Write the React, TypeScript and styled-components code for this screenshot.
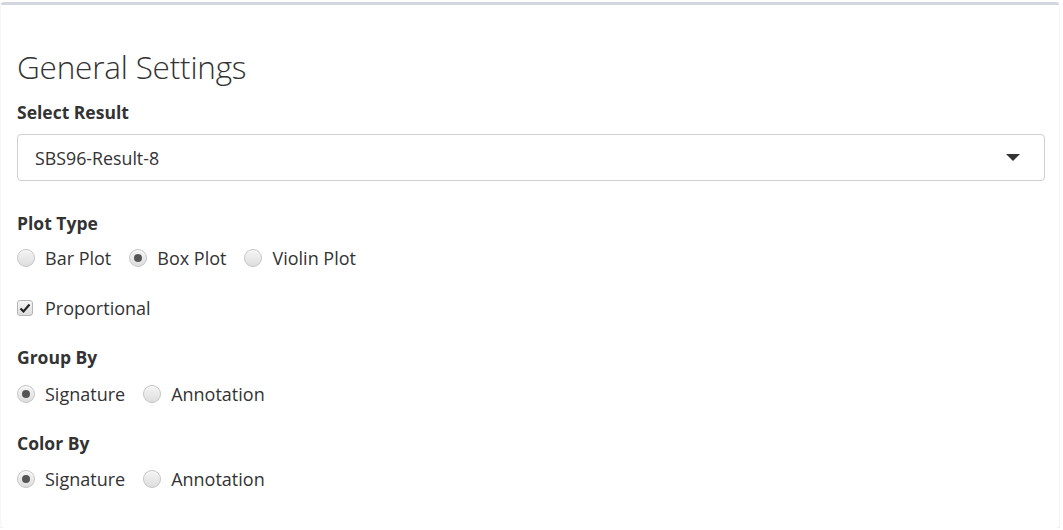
import React, { useState } from "react";
import styled, { createGlobalStyle } from "styled-components";

const GlobalStyle = createGlobalStyle`
  html, body {
    margin: 0;
    padding: 0;
    background: #ffffff;
  }
  body {
    padding: 2px 4px 0 1px;
    font-family: "Open Sans", Lato, sans-serif;
    color: #333333;
  }
  * {
    box-sizing: border-box;
  }
`;

const Box = styled.section`
  width: 1058px;
  height: 526px;
  background: #ffffff;
  border-top: 3px solid #d2d6de;
  border-radius: 3px;
  box-shadow: 0 1px 2px rgba(0, 0, 0, 0.15);
  padding: 44px 14px 0 16px;
  display: flex;
  flex-direction: column;
`;

const Title = styled.h2`
  margin: 0 0 16px 0;
  font-size: 31.5px;
  line-height: 36px;
  font-weight: 300;
  letter-spacing: -0.2px;
  color: #333;
`;

const FieldLabel = styled.div<{ $gap?: number }>`
  font-size: 17.5px;
  line-height: 22px;
  font-weight: 700;
  margin-bottom: ${(p) => p.$gap ?? 11}px;
`;

const Field = styled.div<{ $gap?: number }>`
  margin-bottom: ${(p) => p.$gap ?? 0}px;
`;

const Select = styled.div`
  height: 47px;
  border: 1px solid #cfcfcf;
  border-radius: 4px;
  padding: 0 24px 0 17px;
  display: flex;
  align-items: center;
  justify-content: space-between;
  font-size: 17.8px;
`;

const Caret = styled.span`
  width: 0;
  height: 0;
  border-left: 7px solid transparent;
  border-right: 7px solid transparent;
  border-top: 7px solid #333;
`;

const Options = styled.div`
  display: flex;
  align-items: center;
  height: 22px;
`;

const Option = styled.label`
  display: flex;
  align-items: center;
  gap: 10px;
  margin-right: 18px;
  font-size: 18px;
  color: #333;
  cursor: pointer;
`;

const RadioDot = styled.span<{ $on: boolean }>`
  width: 18px;
  height: 18px;
  border-radius: 50%;
  border: 1px solid #c4c4c4;
  background: linear-gradient(#f4f4f4, #dedede);
  box-shadow: inset 0 1px 1px rgba(255, 255, 255, 0.8);
  display: flex;
  align-items: center;
  justify-content: center;
  &::after {
    content: "";
    width: 8px;
    height: 8px;
    border-radius: 50%;
    background: #555;
    display: ${(p) => (p.$on ? "block" : "none")};
  }
`;

const CheckBox = styled.span`
  width: 16px;
  height: 16px;
  margin-right: 2px;
  border-radius: 3px;
  border: 1px solid #b5b5b5;
  background: linear-gradient(#f6f6f6, #dcdcdc);
  display: flex;
  align-items: center;
  justify-content: center;
  color: #222;
`;

function Radio({
  options,
  value,
  onChange,
}: {
  options: string[];
  value: string;
  onChange: (v: string) => void;
}) {
  return (
    <Options>
      {options.map((o) => (
        <Option key={o} onClick={() => onChange(o)}>
          <RadioDot $on={o === value} />
          {o}
        </Option>
      ))}
    </Options>
  );
}

export default function App() {
  const [plotType, setPlotType] = useState("Box Plot");
  const [proportional, setProportional] = useState(true);
  const [groupBy, setGroupBy] = useState("Signature");
  const [colorBy, setColorBy] = useState("Signature");

  return (
    <>
      <GlobalStyle />
      <Box>
        <Title>General Settings</Title>
        <Field $gap={31}>
          <FieldLabel>Select Result</FieldLabel>
          <Select>
            SBS96-Result-8
            <Caret />
          </Select>
        </Field>
        <Field $gap={28}>
          <FieldLabel $gap={13}>Plot Type</FieldLabel>
          <Radio
            options={["Bar Plot", "Box Plot", "Violin Plot"]}
            value={plotType}
            onChange={setPlotType}
          />
        </Field>
        <Field $gap={27}>
          <Options>
            <Option onClick={() => setProportional(!proportional)}>
              <CheckBox>
                {proportional && (
                  <svg width="12" height="12" viewBox="0 0 12 12">
                    <path
                      d="M1.5 6.5 L4.5 9.5 L10.5 2.5"
                      fill="none"
                      stroke="#222"
                      strokeWidth="2.2"
                    />
                  </svg>
                )}
              </CheckBox>
              Proportional
            </Option>
          </Options>
        </Field>
        <Field $gap={27}>
          <FieldLabel $gap={15}>Group By</FieldLabel>
          <Radio
            options={["Signature", "Annotation"]}
            value={groupBy}
            onChange={setGroupBy}
          />
        </Field>
        <Field>
          <FieldLabel $gap={14}>Color By</FieldLabel>
          <Radio
            options={["Signature", "Annotation"]}
            value={colorBy}
            onChange={setColorBy}
          />
        </Field>
      </Box>
    </>
  );
}
